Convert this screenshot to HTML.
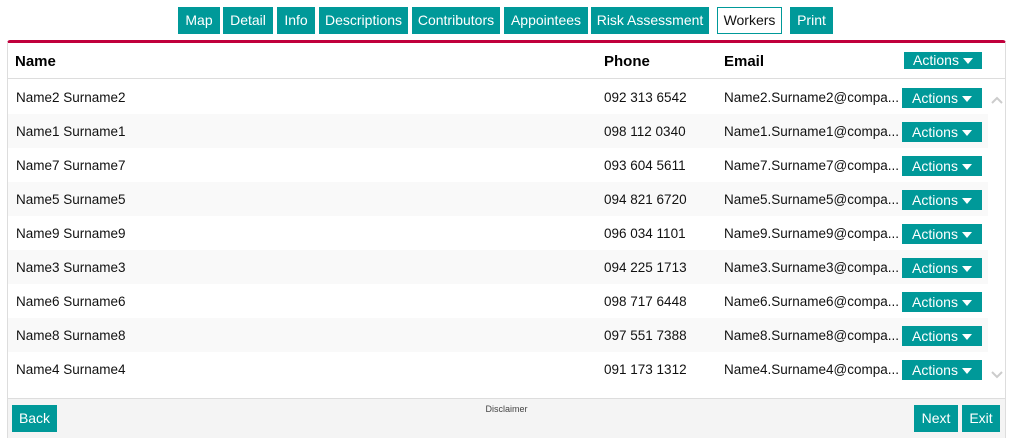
<!DOCTYPE html>
<html><head><style>
body{margin:0;width:1013px;height:438px;overflow:hidden;background:#fff;font-family:"Liberation Sans",Arial,sans-serif;position:relative}
.b{position:absolute;background:#009999;color:#fff;font-size:14px;line-height:27px;text-align:center;box-sizing:border-box}
.nav{top:7px;height:27px}
.w{background:#fff;color:#111;border:1px solid #009999;line-height:25px}
.panel{position:absolute;left:7px;top:40px;width:999px;height:358px;border-top:3px solid #c0003c;border-left:1px solid #ddd;border-right:1px solid #ddd;box-sizing:border-box;border-radius:3px 3px 0 0}
.hd{position:absolute;top:43px;left:8px;width:997px;height:35px;border-bottom:1px solid #ddd;font-weight:bold;font-size:15px}
.hd span,.r span{position:absolute}
.r{position:absolute;left:8px;width:980px;height:34px;font-size:13.5px;color:#111}
.r:nth-child(even){background:#f9f9f9}
.act{position:absolute;left:894px;top:8px;width:80px;height:20px;background:#009999;color:#fff;font-size:14px;line-height:20px;text-align:center}
.tri{display:inline-block;width:0;height:0;border-left:5px solid transparent;border-right:5px solid transparent;border-top:6px solid #fff;vertical-align:middle;margin-left:4px}
.ft{position:absolute;left:7px;top:398px;width:999px;height:40px;background:#f4f4f4;border-top:1px solid #ddd;border-left:1px solid #ddd;border-right:1px solid #ddd;box-sizing:border-box}
</style></head><body>
<div class="b nav" style="left:178px;width:42px">Map</div>
<div class="b nav" style="left:223px;width:50px">Detail</div>
<div class="b nav" style="left:277px;width:38px">Info</div>
<div class="b nav" style="left:319px;width:89px">Descriptions</div>
<div class="b nav" style="left:412px;width:88px">Contributors</div>
<div class="b nav" style="left:504px;width:84px">Appointees</div>
<div class="b nav" style="left:591px;width:118px">Risk Assessment</div>
<div class="b nav w" style="left:717px;width:65px">Workers</div>
<div class="b nav" style="left:790px;width:43px">Print</div>
<div class="panel"></div>
<div class="hd"><span style="left:7px;top:10px">Name</span><span style="left:596px;top:10px">Phone</span><span style="left:716px;top:10px">Email</span>
<div class="act" style="left:896px;top:9px;width:78px;height:17px;line-height:17px;font-weight:normal">Actions<i class="tri"></i></div></div>
<div style="position:absolute;top:80px;left:0">
<div class="r" style="top:0"><span style="left:8px;top:10px">Name2 Surname2</span><span style="left:596px;top:10px">092 313 6542</span><span style="left:716px;top:10px">Name2.Surname2@compa...</span><div class="act">Actions<i class="tri"></i></div></div>
<div class="r" style="top:34px"><span style="left:8px;top:10px">Name1 Surname1</span><span style="left:596px;top:10px">098 112 0340</span><span style="left:716px;top:10px">Name1.Surname1@compa...</span><div class="act">Actions<i class="tri"></i></div></div>
<div class="r" style="top:68px"><span style="left:8px;top:10px">Name7 Surname7</span><span style="left:596px;top:10px">093 604 5611</span><span style="left:716px;top:10px">Name7.Surname7@compa...</span><div class="act">Actions<i class="tri"></i></div></div>
<div class="r" style="top:102px"><span style="left:8px;top:10px">Name5 Surname5</span><span style="left:596px;top:10px">094 821 6720</span><span style="left:716px;top:10px">Name5.Surname5@compa...</span><div class="act">Actions<i class="tri"></i></div></div>
<div class="r" style="top:136px"><span style="left:8px;top:10px">Name9 Surname9</span><span style="left:596px;top:10px">096 034 1101</span><span style="left:716px;top:10px">Name9.Surname9@compa...</span><div class="act">Actions<i class="tri"></i></div></div>
<div class="r" style="top:170px"><span style="left:8px;top:10px">Name3 Surname3</span><span style="left:596px;top:10px">094 225 1713</span><span style="left:716px;top:10px">Name3.Surname3@compa...</span><div class="act">Actions<i class="tri"></i></div></div>
<div class="r" style="top:204px"><span style="left:8px;top:10px">Name6 Surname6</span><span style="left:596px;top:10px">098 717 6448</span><span style="left:716px;top:10px">Name6.Surname6@compa...</span><div class="act">Actions<i class="tri"></i></div></div>
<div class="r" style="top:238px"><span style="left:8px;top:10px">Name8 Surname8</span><span style="left:596px;top:10px">097 551 7388</span><span style="left:716px;top:10px">Name8.Surname8@compa...</span><div class="act">Actions<i class="tri"></i></div></div>
<div class="r" style="top:272px"><span style="left:8px;top:10px">Name4 Surname4</span><span style="left:596px;top:10px">091 173 1312</span><span style="left:716px;top:10px">Name4.Surname4@compa...</span><div class="act">Actions<i class="tri"></i></div></div>
</div>
<svg style="position:absolute;left:990px;top:94px" width="14" height="290"><path d="M2 9 L7 4 L12 9" stroke="#ccc" stroke-width="2" fill="none"/><path d="M2 278 L7 283 L12 278" stroke="#ccc" stroke-width="2" fill="none"/></svg>
<div class="ft"><div style="position:absolute;left:0;right:0;top:5px;text-align:center;font-size:9px;color:#444">Disclaimer</div></div>
<div class="b" style="left:12px;top:405px;width:45px;height:27px">Back</div>
<div class="b" style="left:914px;top:405px;width:44px;height:27px">Next</div>
<div class="b" style="left:962px;top:405px;width:38px;height:27px">Exit</div>
</body></html>
